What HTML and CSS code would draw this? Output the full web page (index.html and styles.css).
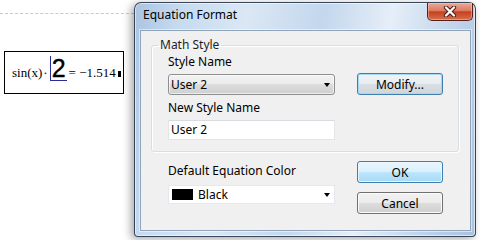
FILE: index.html
```html
<!DOCTYPE html>
<html lang="en">
<head>
  <meta charset="UTF-8" />
  <title>Equation Format</title>
  <link rel="stylesheet" href="styles.css">
</head>
<body>
  <div class="desk">

    <div class="sheet">
      <div class="sheet-rule"></div>
      <div class="region">
        <span class="expr">sin(x)</span><span class="dot">·</span><span class="slot">2</span><span class="result">= −1.514</span><span class="caret"></span>
      </div>
    </div>

    <div class="window">
      <div class="titlebar">
        <span class="title">Equation Format</span>
        <button class="close" aria-label="Close">
          <svg width="14" height="11" viewBox="0 0 14 11">
            <path d="M3 1.5 L11 9.5 M11 1.5 L3 9.5" stroke="#4a1a12" stroke-width="4.2" stroke-linecap="round" fill="none"/>
            <path d="M3 1.5 L11 9.5 M11 1.5 L3 9.5" stroke="#ffffff" stroke-width="2.3" stroke-linecap="round" fill="none"/>
          </svg>
        </button>
      </div>

      <div class="client">
        <fieldset class="group">
          <legend>Math Style</legend>
          <div class="group-grid">
            <label class="lbl">Style Name</label>
            <div class="combo">User 2<span class="arrow"></span></div>
            <button class="btn focus">Modify...</button>
            <label class="lbl lbl-gap">New Style Name</label>
            <div class="edit">User 2</div>
          </div>
        </fieldset>

        <div class="bottom">
          <div class="color-col">
            <label class="lbl">Default Equation Color</label>
            <div class="combo combo-white"><span class="swatch"></span>Black<span class="arrow"></span></div>
          </div>
          <div class="btn-col">
            <button class="btn default">OK</button>
            <button class="btn">Cancel</button>
          </div>
        </div>
      </div>
    </div>

  </div>
</body>
</html>
```

FILE: styles.css
```css
body {
  margin: 0;
  background: #ffffff;
  width: 480px;
  height: 240px;
  overflow: hidden;
  font-family: "Noto Sans", sans-serif;
  font-size: 12px;
  color: #000;
}
.desk {
  display: flex;
  height: 240px;
}

/* worksheet behind the dialog */
.sheet {
  flex: 0 0 134px;
  padding-top: 13px;
  box-sizing: border-box;
}
.sheet-rule {
  border-top: 1px dashed #c9c9c9;
}
.region {
  margin: 37px 0 0 4px;
  width: 120px;
  height: 43px;
  box-sizing: border-box;
  border: 1px solid #000;
  padding-left: 7px;
  display: flex;
  align-items: baseline;
  font-family: "Liberation Serif", serif;
  font-size: 13px;
  line-height: 41px;
}
.dot {
  margin: 0 1px 0 1px;
}
.slot {
  font-family: "Liberation Sans", sans-serif;
  font-size: 25px;
  line-height: 24px;
  -webkit-text-stroke: 0.4px #000;
  border-left: 1px solid #2b2ba0;
  border-bottom: 1px solid #2b2ba0;
  padding: 0 1px 0 1px;
  margin-left: 1px;
}
.result {
  margin-left: 2px;
}
.caret {
  display: inline-block;
  width: 3px;
  height: 6px;
  background: #000;
  margin-left: 2px;
}

/* dialog window */
.window {
  flex: 0 0 342px;
  height: 235px;
  margin-top: 2px;
  box-sizing: border-box;
  border: 1px solid rgba(30, 45, 65, 0.85);
  border-radius: 7px 7px 4px 4px;
  background: linear-gradient(100deg, #a9c3e0 0%, #c6daef 12%, #dbe7f4 30%, #c3d7ed 50%, #e6eef8 68%, #c0d4eb 85%, #a9c2df 100%);
  box-shadow: -3px 2px 8px rgba(0, 0, 0, 0.35), inset 0 0 0 1px rgba(255, 255, 255, 0.55);
  display: flex;
  flex-direction: column;
  padding: 0 4px 5px 5px;
}
.titlebar {
  height: 27px;
  display: flex;
  justify-content: space-between;
  align-items: flex-start;
  padding-left: 3px;
}
.title {
  margin-top: 4px;
  line-height: 16px;
}
.close {
  width: 46px;
  height: 18px;
  margin-right: -2px;
  border: 1px solid #5a2016;
  border-top: none;
  border-radius: 0 0 5px 5px;
  background: linear-gradient(#eba996 0%, #dc7a62 45%, #c6401f 52%, #d4704e 100%);
  box-shadow: inset 0 0 0 1px rgba(255, 210, 190, 0.45);
  padding: 0;
  display: flex;
  align-items: center;
  justify-content: center;
}
.client {
  flex: 1;
  background: #f0f0f0;
  border: 1px solid #90a4bc;
  box-shadow: 0 0 0 1px rgba(255, 255, 255, 0.5);
}

/* group box */
.group {
  margin: 6px 11px 0 10px;
  padding: 0 14px 11px 16px;
  border: 1px solid #d5dfe5;
  border-radius: 3px;
  box-shadow: inset 1px 1px 0 #fff, 1px 1px 0 #fff;
}
.group legend {
  margin-left: -10px;
  padding: 0 2px;
  line-height: 16px;
  color: #1e1e1e;
}
.group-grid {
  display: grid;
  grid-template-columns: 167px 86px;
  column-gap: 22px;
}
.lbl {
  display: block;
  line-height: 16px;
  grid-column: 1 / 3;
  margin-top: 1px;
}
.lbl-gap {
  margin-top: 5px;
}
.combo {
  height: 21px;
  margin-top: 4px;
  box-sizing: border-box;
  border: 1px solid #8e8f8f;
  border-radius: 3px;
  background: linear-gradient(#f2f2f2 0%, #ebebeb 50%, #dddddd 50%, #cfcfcf 100%);
  box-shadow: inset 0 0 0 1px rgba(255, 255, 255, 0.6);
  display: flex;
  align-items: center;
  padding-left: 2px;
}
.arrow {
  margin-left: auto;
  margin-right: 4px;
  width: 0;
  height: 0;
  border-left: 3.5px solid transparent;
  border-right: 3.5px solid transparent;
  border-top: 4px solid #000;
}
.edit {
  grid-column: 1;
  height: 20px;
  margin-top: 4px;
  box-sizing: border-box;
  border: 1px solid #e2e5ea;
  border-top-color: #d8dbe0;
  background: #fff;
  padding-left: 2px;
  line-height: 18px;
}

/* buttons */
.btn {
  width: 86px;
  height: 22px;
  box-sizing: border-box;
  font-family: "Noto Sans", sans-serif;
  font-size: 12px;
  color: #000;
  border: 1px solid #707070;
  border-radius: 3px;
  background: linear-gradient(#f2f2f2 0%, #ebebeb 50%, #dddddd 50%, #cfcfcf 100%);
  box-shadow: inset 0 0 0 1px #fbfbfb;
  padding: 0;
}
.btn.focus {
  grid-column: 2;
  grid-row: 2;
  margin-top: 3px;
  border-color: #3c7fb1;
  box-shadow: inset 0 0 0 1px #a6d8f3;
  background: linear-gradient(#f0f3f6 0%, #e8ecf0 50%, #dadfe4 50%, #cfd5db 100%);
}
.btn.default {
  border-color: #3c7fb1;
  background: linear-gradient(#eaf6fd 0%, #d9f0fc 50%, #bee6fd 50%, #a7d9f5 100%);
  box-shadow: inset 0 0 0 1px #e9f6fd;
}

/* lower section */
.bottom {
  display: flex;
  gap: 22px;
  margin-top: 9px;
  padding-left: 27px;
}
.color-col {
  width: 167px;
}
.color-col .lbl {
  margin-top: 2px;
}
.combo-white {
  margin-top: 6px;
  height: 19px;
  border: 1px solid #e3e9ef;
  border-radius: 0;
  background: #fff;
  box-shadow: none;
  padding-left: 3px;
}
.swatch {
  width: 21px;
  height: 11px;
  background: #000;
  margin-right: 5px;
}
.btn-col {
  display: flex;
  flex-direction: column;
  gap: 9px;
}
```
